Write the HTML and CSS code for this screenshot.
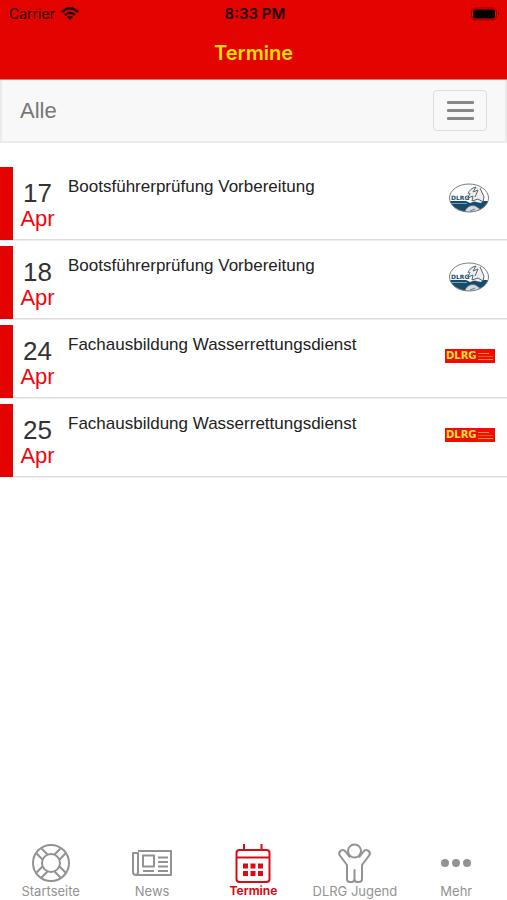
FILE: index.html
```html
<!DOCTYPE html>
<html lang="de">
<head>
<meta charset="utf-8">
<meta name="viewport" content="width=device-width, initial-scale=1">
<title>Termine</title>
<link rel="stylesheet" href="styles.css">
</head>
<body>
<header class="header">
  <div class="status">
    <span class="carrier">Carrier
      <svg width="18" height="14" viewBox="0 0 18 14" fill="none" stroke="#260000" stroke-width="2.400" aria-hidden="true"><path d="M1 5q8-7.500 16 0M4 8q5-4.500 10 0"/><path d="M6 10q3-2.500 6 0l-3 3z" fill="#260000" stroke="none"/></svg>
    </span>
    <span class="time">8:33 PM</span>
    <svg class="battery" width="30" height="14" viewBox="0 0 30 14" aria-hidden="true"><rect x=".5" y="1" width="25" height="12" rx="3.500" fill="none" stroke="#9b0000"/><rect x="2" y="2.500" width="22" height="9" rx="2" fill="#000"/><path d="M27 5q2 2 0 4z" fill="#780000"/></svg>
  </div>
  <h1>Termine</h1>
</header>
<nav class="filter" aria-label="Filter">
  <span>Alle</span>
  <button type="button" aria-label="Menü"><i></i><i></i><i></i></button>
</nav>
<main>
  <ul class="events">
    <li><time><span>17</span><b>Apr</b></time><p>Bootsführerprüfung Vorbereitung</p>
      <svg class="oval" viewBox="0 0 42 32">
        <clipPath id="oval-clip"><ellipse cx="21" cy="16" rx="19.5" ry="14"/></clipPath>
        <g id="logo-oval">
          <ellipse cx="21" cy="16" rx="19.5" ry="14" fill="#fff"/>
          <g clip-path="url(#oval-clip)">
            <path d="M0 19h18l4 2 6-2h14v13H0z" fill="#174b6d"/>
            <path d="M3 21.500h16" fill="none" stroke="#7d9db2" stroke-width="1"/>
            <path d="M21 11c1-4 5-7 9-6l3 4 3 9-3 3-5-1-5-3z" fill="#eceeef"/>
            <path d="M20 12c1-4 4-6 8-7l-3 5 5-2-3 7M32 6l4 9-1 5M22 11l-2 5 5-2-1 5 6-2 5 3" fill="none" stroke="#59646b" stroke-width="1"/>
            <path d="M17 29c2-5 8-7 12-4l3 2-3 5H18z" fill="#d7dbde" stroke="#59646b" stroke-width=".7"/>
            <path d="M22 29l5-2" stroke="#6c777e" stroke-width="1"/>
          </g>
          <ellipse cx="21" cy="16" rx="19.5" ry="14" fill="none" stroke="#728087" stroke-width="1"/>
          <text x="3" y="18" class="oval-text">DLRG</text>
        </g>
      </svg></li>
    <li><time><span>18</span><b>Apr</b></time><p>Bootsführerprüfung Vorbereitung</p><svg class="oval" viewBox="0 0 42 32"><use href="#logo-oval"/></svg></li>
    <li><time><span>24</span><b>Apr</b></time><p>Fachausbildung Wasserrettungsdienst</p>
      <svg class="bar" viewBox="0 0 50 14">
        <g id="logo-bar">
          <path d="M0 0h50v14H0z" fill="#f20a05"/>
          <text x="1" y="10" class="bar-text">DLRG</text>
          <path d="M33 4.500h11M33 10.500h15" stroke="#f99a18" stroke-width="1"/>
          <path d="M33 7.500h15" stroke="#f55c10" stroke-width="1"/>
        </g>
      </svg></li>
    <li><time><span>25</span><b>Apr</b></time><p>Fachausbildung Wasserrettungsdienst</p><svg class="bar" viewBox="0 0 50 14"><use href="#logo-bar"/></svg></li>
  </ul>
</main>
<nav class="tabs" aria-label="Navigation">
  <a href="#start"><svg viewBox="0 0 40 40"><circle cx="20" cy="20" r="18"/><circle cx="20" cy="20" r="9"/><path d="M10.500 5.500l6 6M5.500 10.500l6 6M29.500 5.500l-6 6M34.500 10.500l-6 6M10.500 34.500l6-6M5.500 29.500l6-6M29.500 34.500l-6-6M34.500 29.500l-6-6"/></svg>Startseite</a>
  <a href="#news"><svg viewBox="0 0 40 40"><path d="M6 8h33v24H4q-3 0-3-3V10h5v19q0 3-2.500 3M11 12.500h11v11H11zM26 14.500h10M26 19h10M26 23.500h10M11 28h11M26 28h10"/></svg>News</a>
  <a href="#termine" class="active" aria-current="page"><svg viewBox="0 0 40 40"><rect x="3.500" y="7" width="33" height="32" rx="3"/><path d="M3.500 14.500h33M11 1v6M28.500 1v6"/><path class="solid" d="M10 20.500h5v5h-5zM17.500 20.500h5v5h-5zM25 20.500h5v5h-5zM10 28h5v5h-5zM17.500 28h5v5h-5zM25 28h5v5h-5z"/></svg>Termine</a>
  <a href="#jugend"><svg viewBox="0 0 40 40"><circle cx="19.500" cy="8" r="6.500"/><path d="M15 14.500L10.500 8.500C8 5.500 3 8 4.500 12L12 22V36q0 3 3 3h1.500q3 0 3-3V27v9q0 3 3 3H24q3 0 3-3V22l7.500-10C36 8 31 5.500 28.500 8.500L24 14.500"/></svg>DLRG Jugend</a>
  <a href="#mehr"><svg viewBox="0 0 40 40"><g class="solid"><circle cx="9" cy="20" r="4"/><circle cx="20" cy="20" r="4"/><circle cx="31" cy="20" r="4"/></g></svg>Mehr</a>
</nav>
</body>
</html>
```

FILE: styles.css
```css
* { box-sizing: border-box; }
body {
  margin: 0;
  min-height: 100vh;
  display: flex;
  flex-direction: column;
  background: #fff;
  font-family: "Liberation Sans", Arial, sans-serif;
}
.header {
  background: #e30400;
  border-bottom: 1px solid #f26e6c;
  font-family: Inter, sans-serif;
}
.status {
  display: grid;
  grid-template-columns: 1fr auto 1fr;
  align-items: center;
  height: 27px;
  padding: 0 6px 0 9px;
  font-size: 14px;
  color: #260000;
}
.carrier { display: flex; align-items: center; gap: 6px; }
.time { font-size: 15px; font-weight: 600; }
.battery { justify-self: end; }
.header h1 {
  margin: 0;
  padding: 12px 0;
  font-size: 20px;
  line-height: 28px;
  font-weight: 600;
  text-align: center;
  color: #ffdf00;
}
.filter {
  display: flex;
  align-items: center;
  justify-content: space-between;
  padding: 10px 18px;
  border: 2px solid #ebebeb;
  border-top: 0;
  background: #f8f8f8;
  color: #777;
  font-size: 22px;
}
.filter button {
  display: flex;
  flex-direction: column;
  align-items: center;
  justify-content: center;
  gap: 5px;
  width: 54px;
  height: 41px;
  padding: 0;
  border: 1px solid #ddd;
  border-radius: 4px;
  background: transparent;
}
.filter i { width: 27px; height: 3px; border-radius: 1px; background: #888; }
main { flex: 1; }
.events {
  display: grid;
  gap: 6px;
  margin: 0;
  padding: 24px 0 0;
  list-style: none;
}
.events li {
  display: flex;
  height: 73px;
  border-left: 13px solid #e30400;
  box-shadow: inset 0 -1px #ddd, 0 1px #eee;
}
.events time {
  display: flex;
  flex-direction: column;
  align-items: center;
  width: 49px;
  padding-top: 13px;
  line-height: 26px;
}
.events time span { font-size: 26px; color: #333; }
.events time b { font-size: 22px; font-weight: 400; color: #f0060b; }
.events p {
  flex: 1;
  margin: 0;
  padding: 10px 6px;
  font-size: 17px;
  line-height: 20px;
  color: #222;
}
.oval { width: 42px; height: 32px; margin: 15px 17px 0 0; }
.bar { width: 50px; height: 14px; margin: 24px 12px 0 0; }
.oval-text { font: bold 6px "DejaVu Sans", sans-serif; fill: #174b6d; }
.bar-text { font: bold 10px "DejaVu Sans", sans-serif; fill: #ffe329; }
.tabs {
  display: grid;
  grid-template-columns: repeat(5, 1fr);
  padding-bottom: 1px;
  font-family: Inter, sans-serif;
  font-size: 13px;
  line-height: 16px;
  font-weight: 400;
}
.tabs a {
  display: flex;
  flex-direction: column;
  align-items: center;
  color: #929292;
  text-decoration: none;
}
.tabs svg {
  width: 40px;
  height: 40px;
  fill: none;
  stroke: currentColor;
  stroke-width: 2;
  stroke-linejoin: round;
}
.tabs .solid { fill: currentColor; stroke: none; }
.tabs .active { color: #db0b15; font-size: 12px; font-weight: 700; }
```
